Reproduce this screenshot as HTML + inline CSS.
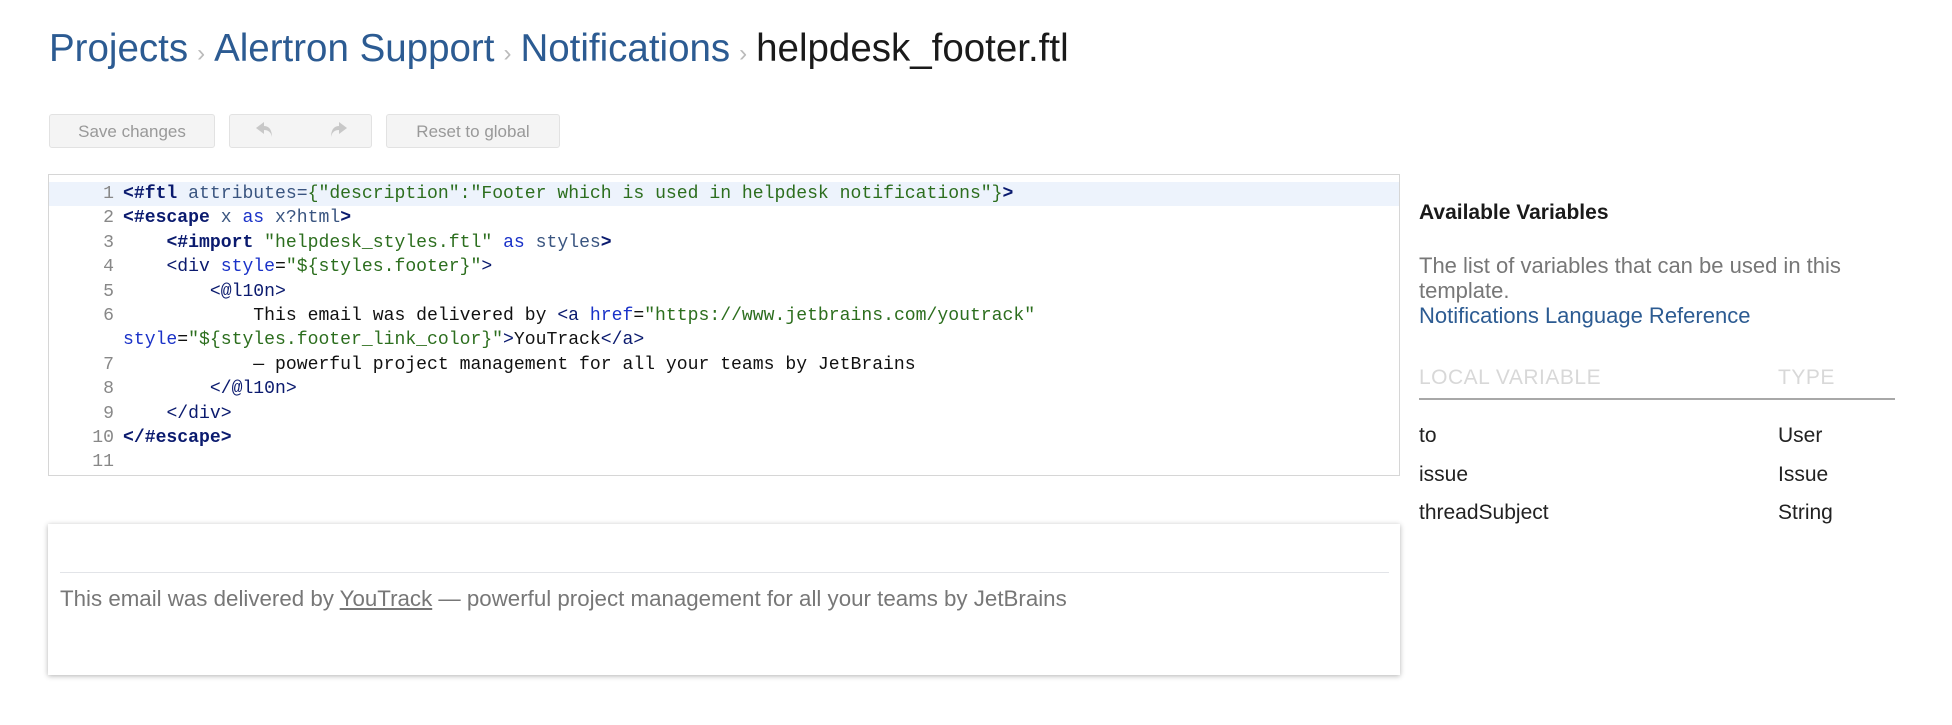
<!DOCTYPE html>
<html><head><meta charset="utf-8"><style>
body{margin:0;width:1952px;height:725px;background:#fff;font-family:"Liberation Sans",sans-serif;position:relative;overflow:hidden}
.a{position:absolute;white-space:nowrap}
.bc{left:49px;top:27px;font-size:38.5px;color:#2c5b92}
.bc .s{color:#bbb;font-size:24px;margin:0 9px}
.bc .c{color:#1a1a1a}
.btn{position:absolute;top:114px;height:34px;border:1px solid #e2e2e2;border-radius:3px;background:#f4f4f4;color:#999;font-size:17px;line-height:34px;text-align:center;box-sizing:border-box}
.ed{left:48px;top:174px;width:1352px;height:302px;border:1px solid #d6d6d6;box-sizing:border-box}
.code{position:absolute;left:0;top:7px;font-family:"Liberation Mono",monospace;font-size:18.1px;line-height:24.4px;width:100%}
.ln{display:flex;height:24.4px}
.n{width:65px;text-align:right;color:#888;padding-right:9px;flex:none}
.t{white-space:pre;color:#111}
.k{color:#0a1a6e;font-weight:bold}.at{color:#3a5580}.st{color:#2c6e1e}.kw{color:#1a32c8}.tg{color:#0a1a6e}
.hl{background:#edf3fc}
.pv{left:48px;top:524px;width:1352px;height:151px;box-shadow:0 1px 5px rgba(0,0,0,.3);background:#fff}
</style></head><body>
<div class="a bc">Projects<span class="s">›</span>Alertron Support<span class="s">›</span>Notifications<span class="s">›</span><span class="c">helpdesk_footer.ftl</span></div>
<div class="btn" style="left:49px;width:166px">Save changes</div>
<div class="btn" style="left:229px;width:143px"><svg width="143" height="32" viewBox="0 0 143 32"><path d="M34 7 L26 13 L34 19 V15 C38 15 41 17 42 22 C42 15 39 11 34 11Z" fill="#c8c8c8"/><path d="M109 7 L117 13 L109 19 V15 C105 15 102 17 101 22 C101 15 104 11 109 11Z" fill="#c8c8c8"/></svg></div>
<div class="btn" style="left:386px;width:174px">Reset to global</div>
<div class="a ed"><div class="code">
<div class="ln hl"><span class="n">1</span><span class="t"><span class="k">&lt;#ftl</span> <span class="at">attributes=</span><span class="st">{"description":"Footer which is used in helpdesk notifications"}</span><span class="k">&gt;</span></span></div>
<div class="ln"><span class="n">2</span><span class="t"><span class="k">&lt;#escape</span> <span class="at">x</span> <span class="kw">as</span> <span class="at">x?html</span><span class="k">&gt;</span></span></div>
<div class="ln"><span class="n">3</span><span class="t">    <span class="k">&lt;#import</span> <span class="st">"helpdesk_styles.ftl"</span> <span class="kw">as</span> <span class="at">styles</span><span class="k">&gt;</span></span></div>
<div class="ln"><span class="n">4</span><span class="t">    <span class="tg">&lt;div</span> <span class="kw">style</span>=<span class="st">"${styles.footer}"</span><span class="tg">&gt;</span></span></div>
<div class="ln"><span class="n">5</span><span class="t">        <span class="tg">&lt;@l10n&gt;</span></span></div>
<div class="ln"><span class="n">6</span><span class="t">            This email was delivered by <span class="tg">&lt;a</span> <span class="kw">href</span>=<span class="st">"https://www.jetbrains.com/youtrack"</span></span></div>
<div class="ln"><span class="n"></span><span class="t"><span class="kw">style</span>=<span class="st">"${styles.footer_link_color}"</span><span class="tg">&gt;</span>YouTrack<span class="tg">&lt;/a&gt;</span></span></div>
<div class="ln"><span class="n">7</span><span class="t">            — powerful project management for all your teams by JetBrains</span></div>
<div class="ln"><span class="n">8</span><span class="t">        <span class="tg">&lt;/@l10n&gt;</span></span></div>
<div class="ln"><span class="n">9</span><span class="t">    <span class="tg">&lt;/div&gt;</span></span></div>
<div class="ln"><span class="n">10</span><span class="t"><span class="k">&lt;/#escape&gt;</span></span></div>
<div class="ln"><span class="n">11</span><span class="t"></span></div>
</div></div>
<div class="a" style="left:1419px;top:201px;font-size:21px;font-weight:bold;color:#1a1a1a">Available Variables</div>
<div class="a" style="left:1419px;top:253px;font-size:22px;line-height:25px;color:#777">The list of variables that can be used in this<br>template.<br><span style="color:#2c5b92">Notifications Language Reference</span></div>
<div class="a" style="left:1419px;top:366px;font-size:21px;color:#d8d8d8;letter-spacing:0.5px">LOCAL VARIABLE</div>
<div class="a" style="left:1778px;top:366px;font-size:21px;color:#d8d8d8;letter-spacing:0.5px">TYPE</div>
<div class="a" style="left:1419px;top:398px;width:476px;height:2px;background:#a8a8a8"></div>
<div class="a" style="left:1419px;top:417px;font-size:21px;line-height:38.5px;color:#222">to<br>issue<br>threadSubject</div>
<div class="a" style="left:1778px;top:417px;font-size:21px;line-height:38.5px;color:#222">User<br>Issue<br>String</div>
<div class="a pv"><div style="position:absolute;left:12px;top:48px;width:1329px;height:1px;background:#e2e4e8"></div>
<div class="a" style="left:12px;top:62px;font-size:22.3px;color:#777">This email was delivered by <span style="text-decoration:underline">YouTrack</span> — powerful project management for all your teams by JetBrains</div></div>
</body></html>
